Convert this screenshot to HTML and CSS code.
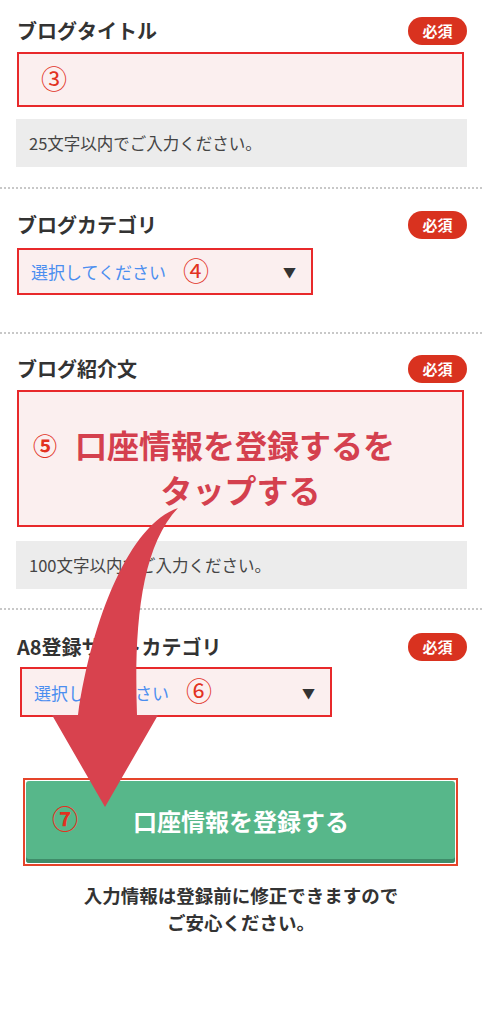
FILE: index.html
```html
<!DOCTYPE html>
<html lang="ja">
<head>
    <meta charset="utf-8">
    <title>ブログ情報の登録</title>
    <link rel="stylesheet" href="styles.css">
</head>
<body>
    <div id="page">
        <section class="field field-first">
            <div class="field-head">
                <h2 class="label">ブログタイトル</h2>
                <span class="req">必須</span>
            </div>
            <div class="box box-input"><span class="num">③</span></div>
            <p class="help">25文字以内でご入力ください。</p>
        </section>

        <section class="field field-second">
            <div class="field-head">
                <h2 class="label">ブログカテゴリ</h2>
                <span class="req">必須</span>
            </div>
            <div class="box box-select">
                <span class="placeholder">選択してください</span>
                <span class="num">④</span>
                <span class="caret">▼</span>
            </div>
        </section>

        <section class="field field-third">
            <div class="field-head">
                <h2 class="label">ブログ紹介文</h2>
                <span class="req">必須</span>
            </div>
            <div class="box box-text">
                <p class="note-line first"><span class="num">⑤</span>口座情報を登録するを</p>
                <p class="note-line">タップする</p>
            </div>
            <p class="help">100文字以内でご入力ください。</p>
        </section>

        <section class="field field-last">
            <div class="field-head">
                <h2 class="label">A8登録サイトカテゴリ</h2>
                <span class="req">必須</span>
            </div>
            <div class="box box-select wide">
                <span class="placeholder">選択してください</span>
                <span class="num">⑥</span>
                <span class="caret">▼</span>
            </div>
        </section>

        <div id="submit-area">
            <div class="mark-frame">
                <button type="button" id="submitButton"><span class="num">⑦</span>口座情報を登録する</button>
            </div>
            <p class="footnote">入力情報は登録前に修正できますので<br>ご安心ください。</p>
        </div>

        <!-- annotation arrow -->
        <svg class="arrow" width="482" height="1024" viewBox="0 0 482 1024">
            <path d="M178 508 C130 524 92 618 78 715 L52 715 L105 807 L158 715 L137 715 C134 630 140 548 178 508 Z" fill="#d8424e"/>
        </svg>
    </div>
</body>
</html>
```

FILE: styles.css
```css
body {
    margin: 0;
    padding: 0;
    background: #fff;
    color: #333;
    font-family: "Noto Sans CJK JP", "Noto Sans", sans-serif;
}
#page {
    position: relative;
    width: 482px;
    min-height: 1024px;
}
.field {
    padding: 0 15px 0 16px;
    border-bottom: 2px dotted #c8c8c8;
}
.field-first {
    padding-top: 17px;
    padding-bottom: 20px;
}
.field-second {
    padding-top: 22px;
    padding-bottom: 37px;
}
.field-third {
    padding-top: 21px;
    padding-bottom: 19px;
}
.field-last {
    padding-top: 23px;
    border-bottom: none;
}
.field-head {
    display: flex;
    justify-content: space-between;
    align-items: center;
    height: 28px;
}
.label {
    margin: 0 0 0 1px;
    font-size: 20px;
    font-weight: bold;
    line-height: 28px;
    color: #333;
}
.req {
    width: 59px;
    height: 28px;
    border-radius: 14px;
    background: #d9321f;
    color: #fff;
    font-size: 15px;
    font-weight: bold;
    line-height: 28px;
    text-align: center;
}
.box {
    box-sizing: border-box;
    border: 2px solid #e8292b;
    background: #fbefef;
    margin-left: 1px;
}
.num {
    font-family: "DejaVu Serif", "Noto Sans CJK JP", serif;
    color: #e2321f;
    font-size: 26px;
    line-height: 1;
}
.box-input {
    height: 55px;
    margin-top: 7px;
    margin-right: 3px;
    padding: 0 0 0 22px;
    display: flex;
    align-items: center;
}
.help {
    margin: 12px 0 0;
    height: 48px;
    background: #ececec;
    font-size: 16.5px;
    line-height: 48px;
    padding-left: 13px;
    color: #444;
}
.box-select {
    width: 296px;
    height: 47px;
    margin-top: 9px;
    display: flex;
    align-items: center;
    padding: 0 12px 0 12px;
}
.box-select.wide {
    width: 312px;
    height: 50px;
    margin-top: 6px;
    margin-left: 4px;
}
.placeholder {
    color: #4b8ef0;
    font-size: 17px;
}
.box-select .num {
    margin-left: 17px;
}
.caret {
    margin-left: auto;
    margin-right: 3px;
    font-size: 13px;
    color: #333;
}
.box-text {
    height: 137px;
    margin-top: 7px;
    margin-right: 3px;
    padding-top: 30px;
}
.note-line {
    margin: 0;
    font-size: 32px;
    font-weight: bold;
    line-height: 45px;
    color: #d4404e;
    text-align: center;
}
.note-line.first {
    text-align: left;
    padding-left: 14px;
}
.note-line .num {
    font-size: 24px;
    margin-right: 18px;
    vertical-align: 3px;
}
.field-third .help {
    margin-top: 14px;
}
#submit-area {
    padding: 61px 0 0;
    text-align: center;
}
.mark-frame {
    margin: 0 24px 0 23px;
    border: 2px solid #e5442a;
    padding: 1px;
}
#submitButton {
    display: flex;
    align-items: center;
    width: 100%;
    height: 82px;
    border: none;
    border-radius: 3px;
    background: #57b78a;
    box-shadow: inset 0 -4px 0 #3f8c69;
    color: #fff;
    font-family: "Noto Sans CJK JP", sans-serif;
    font-size: 24px;
    font-weight: bold;
    padding: 0 0 4px 26px;
}
#submitButton .num {
    margin-right: 55px;
}
.footnote {
    margin: 16px 0 0;
    font-size: 18.5px;
    font-weight: bold;
    line-height: 27px;
    color: #333;
}
.arrow {
    position: absolute;
    left: 0;
    top: 0;
    pointer-events: none;
}
```
